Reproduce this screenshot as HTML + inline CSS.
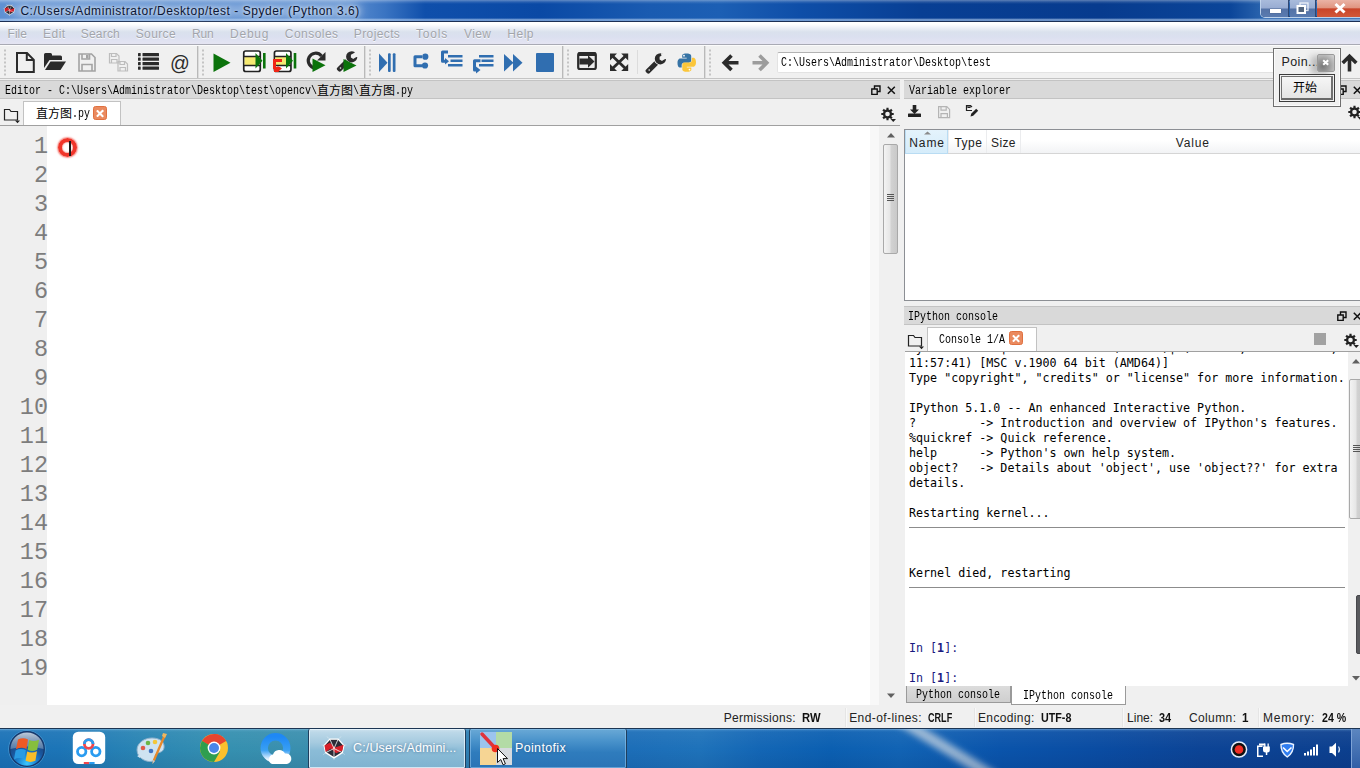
<!DOCTYPE html>
<html lang="en">
<head>
<meta charset="utf-8">
<title>Spyder</title>
<style>
*{box-sizing:border-box;margin:0;padding:0}
html,body{width:1360px;height:768px;overflow:hidden;background:#f0f0f0;font-family:"Liberation Sans","Noto Sans CJK SC",sans-serif;font-size:12px;color:#000}
.abs{position:absolute}
#titlebar{position:absolute;left:0;top:0;width:1360px;height:22px;background:linear-gradient(90deg,#5f91d3 0px,#5a8dd1 200px,#5d8fd1 345px,#3a74c2 385px,#0f4fab 425px,#0a49a5 540px,#1a5bb1 650px,#1c5fb4 720px,#0e4ea8 800px,#083f94 920px,#073b8e 1100px,#0b4599 1230px,#2a64ae 1262px);border-bottom:1px solid #1b2f55}
#titletext{position:absolute;left:20.4px;top:4px;font-size:12px;letter-spacing:.55px;color:#0b1533;white-space:nowrap;text-shadow:0 0 6px rgba(255,255,255,.75),0 0 3px rgba(255,255,255,.6)}
#tglow{position:absolute;left:10px;top:3px;width:352px;height:15px;background:rgba(255,255,255,.27);filter:blur(5px);border-radius:8px}
#tshine{position:absolute;left:0;top:0;width:1360px;height:21px;background:linear-gradient(180deg,rgba(255,255,255,.35) 0,rgba(255,255,255,.12) 2px,rgba(255,255,255,0) 4px,rgba(255,255,255,0) 18px,rgba(190,215,245,.55) 19.500px,rgba(190,215,245,.55) 21px)}
#winbtns{position:absolute;left:1260px;top:0;width:101px;height:18px;border:1px solid rgba(215,228,245,.85);border-top:none;border-radius:0 0 0 5px;overflow:hidden;box-shadow:0 0 0 1px rgba(20,40,80,.5) inset}
#bmin,#bmax,#bclose{position:absolute;top:0;height:17px}
#bmin{left:0;width:28px;background:linear-gradient(180deg,#a9bbdb 0,#98acd2 48%,#5472a6 52%,#5a7bb0 100%);border-right:1px solid #2f4873}
#bmin i{position:absolute;left:9px;top:9px;width:11px;height:3.500px;background:#fff;box-shadow:0 0 1px #334}
#bmax{left:29px;width:26px;background:linear-gradient(180deg,#a9bbdb 0,#98acd2 48%,#5472a6 52%,#5a7bb0 100%);border-right:1px solid #2f4873}
#bclose{left:56px;width:46px;background:linear-gradient(180deg,#eab3a5 0,#e09580 46%,#c9452a 52%,#d2583a 100%)}
#menubar{position:absolute;left:0;top:22px;width:1360px;height:23px;background:linear-gradient(180deg,#fff 0,#fff 2px,#eceff7 6px,#dae1ed 10px,#dbe0f0 15px,#e5e4f2 22px);border-bottom:1px solid #a9aab4}
#menubar span{position:absolute;top:4.5px;text-shadow:0 1px 0 rgba(255,255,255,.8);color:#a2a5ab;font-size:12px;white-space:nowrap}
#toolbar{position:absolute;left:0;top:45px;width:1360px;height:34px;background:#f0f0f0;border-top:1px solid #fbfbfb;border-bottom:1px solid #c4c4c4}
.docktitle{position:absolute;height:19px;background:#d9d9d9;border-top:1px solid #c3c3c3;border-bottom:1px solid #c3c3c3;font-family:"Liberation Mono","Noto Sans CJK SC",monospace;font-size:11px;letter-spacing:-0.6px;line-height:17px;white-space:nowrap;color:#000}
.docktitle .cj{letter-spacing:0;font-size:12px}
.sm{position:absolute;font-family:"Liberation Mono",monospace;font-size:12px;line-height:12px;white-space:nowrap;transform:scaleX(.8333);transform-origin:0 0;color:#000;letter-spacing:0}
.ck{position:absolute;font-family:"Noto Sans CJK SC","Liberation Sans",sans-serif;font-size:12px;line-height:12px;white-space:nowrap;color:#000;letter-spacing:0}
.mono{font-family:"Liberation Mono","Noto Sans CJK SC",monospace;font-size:11px;letter-spacing:-0.6px;white-space:nowrap}
#pathbox{position:absolute;left:777px;top:6px;width:560px;height:21px;background:#fff;border:1px solid #e3e3e3;border-top-color:#b2b2b2;border-radius:2px;padding:4px 0 0 3px;line-height:12px}
#editor{position:absolute;left:0;top:126px;width:870px;height:579px;background:#fff}
#gutter{position:absolute;left:0;top:0;width:47px;height:579px;background:#efefef}
.ln{position:absolute;left:1px;width:47px;text-align:right;font-family:"Liberation Mono","DejaVu Sans Mono",monospace;font-size:23.5px;color:#7d7d7d;line-height:29px;height:29px;padding-right:0}
#ring{position:absolute;left:58.1px;top:11.8px;width:19.2px;height:19.2px;border-radius:50%;border:4px solid #f0352a;box-shadow:0 0 1.5px 1px rgba(240,53,42,.55),inset 0 0 1.5px .5px rgba(240,53,42,.5)}
#caret{position:absolute;left:69px;top:14.5px;width:1.5px;height:15px;background:#1a1a1a}
#edscroll{position:absolute;left:883px;top:126px;width:16px;height:579px;background:#f0f0f0}
#edthumb{position:absolute;left:0;top:18px;width:15px;height:110px;border:1px solid #a9a9a9;border-radius:2px;background:linear-gradient(90deg,#f3f3f3 0,#e6e6e6 45%,#d2d2d2 55%,#c9c9c9 100%)}
#edthumb i{position:absolute;left:3px;width:7px;height:1px;background:#555}
#edthumb i:nth-child(1){top:49px}#edthumb i:nth-child(2){top:51px}#edthumb i:nth-child(3){top:53px}#edthumb i:nth-child(4){top:55px}
#edtabs{position:absolute;left:0;top:100px;width:900px;height:26px;border-bottom:1px solid #a0a0a0}
.tab{position:absolute;background:#fff;border:1px solid #c2c2c2;border-bottom:none}
.cj{letter-spacing:0;font-size:12px}
.xbtn{position:absolute;width:14px;height:14px;border-radius:2.5px;background:#ea8a5f;border:1px solid #e0703f}
.xbtn:before,.xbtn:after{content:"";position:absolute;left:5px;top:1.500px;width:2.400px;height:9px;background:#fff;transform:rotate(45deg);border-radius:.5px}
.xbtn:after{transform:rotate(-45deg)}
#vartable{position:absolute;left:904px;top:129px;width:461px;height:172px;background:#fff;border:1px solid #8c8f94}
#varhead{position:absolute;left:0;top:0;width:458px;height:24px;background:linear-gradient(180deg,#fff 0,#fff 45%,#f2f3f5 100%);border-bottom:1px solid #d5d5d5}
#varhead span{position:absolute;top:6px;font-size:12px;color:#222}
#varhead i{position:absolute;top:0;width:1px;height:23px;background:#ebecee}
#hname{position:absolute;left:0;top:0;width:43px;height:24px;background:linear-gradient(180deg,#e4f3fc 0,#d5ecfa 100%);border:1px solid #b9dcf3;border-top:none}
#contabs{position:absolute;left:905px;top:325px;width:455px;height:27px;border-bottom:1px solid #a0a0a0}
#conscroll{position:absolute;left:1348px;top:352px;width:12px;height:334px;background:#f0f0f0}
#conthumb1{position:absolute;left:1px;top:27px;width:15px;height:140px;border:1px solid #a9a9a9;border-radius:2px;background:linear-gradient(90deg,#f3f3f3 0,#e6e6e6 45%,#d2d2d2 55%,#c9c9c9 100%)}
#conthumb2{position:absolute;left:8px;top:243px;width:14px;height:59px;border:1px solid #46474b;border-radius:2px;background:#58595d}
#conthumb1 i{position:absolute;left:3px;width:8px;height:1px;background:#555}
#bottabs{position:absolute;left:905px;top:686px;width:455px;height:20px}
#bt1{position:absolute;left:1px;top:0;width:105px;height:17px;background:linear-gradient(180deg,#dcdcdc,#cfcfcf);border:1px solid #9a9a9a;border-top:none;padding:2px 0 0 10px;line-height:12px}
#bt2{position:absolute;left:106px;top:0;width:115px;height:19px;background:#fff;border:1px solid #9a9a9a;border-top:none;padding:4px 0 0 12px;line-height:12px}
#console{position:absolute;left:905px;top:352px;width:443px;height:334px;background:#fff;overflow:hidden}
#console pre{position:absolute;left:4px;top:-11.5px;font-family:"DejaVu Sans Mono","Liberation Mono",monospace;font-size:11.68px;line-height:15px;color:#000}
.hr{position:absolute;left:4px;width:436px;height:1px;background:#8c8c8c}
#console pre.inp{color:#1a1a80}
#popup{position:absolute;left:1273px;top:48px;width:68px;height:59px;background:#f0f0f0;border:1px solid #6f6f6f;box-shadow:inset 0 0 0 1px #fbfbfb}
#poptitle{position:absolute;left:7.500px;top:6px;font-size:12.500px;letter-spacing:.4px;color:#222}
#popx{position:absolute;left:43px;top:5px;width:18px;height:18px;border:1px solid #9a9a9a;border-radius:2px;background:radial-gradient(circle at 30% 70%,#7a7a7a 0,#9a9a9a 40%,#d8d8d8 100%);box-shadow:-6px 2px 6px rgba(90,90,90,.35)}
#popbtn{position:absolute;left:5px;top:25px;width:56px;height:28px;border:1px solid #3c3c3c;padding:1px;background:#f0f0f0}
#popbtn div{width:52px;height:24px;border:1px solid #707070;border-right:2px solid #707070;border-bottom:2px solid #696969;background:linear-gradient(180deg,#f6f6f6,#e4e4e4);text-align:center;padding-right:3px}
#popbtn span{font-family:"Liberation Sans","Noto Sans CJK SC",sans-serif;font-size:12px;line-height:22px;color:#000}
#statusbar{position:absolute;left:0;top:706px;width:1360px;height:22px;background:#f0f0f0}
#statusbar span{position:absolute;top:5px;font-size:12px;white-space:nowrap;color:#222}
#statusbar b{position:absolute;top:5px;font-weight:bold;font-size:12px;white-space:nowrap;color:#111}
#statusbar i{position:absolute;top:2px;width:2px;height:19px;background:linear-gradient(90deg,#e5e5e5 50%,#f8f8f8 50%)}
#tkstreak{position:absolute;left:887px;top:14px;width:120px;height:11px;background:rgba(185,203,220,.8);filter:blur(3px);transform:rotate(31.4deg);border-radius:5px}
#tktop{position:absolute;left:0;top:0;width:1360px;height:40px;background:linear-gradient(180deg,rgba(170,210,240,.55) 0,rgba(170,210,240,.18) 1.500px,rgba(255,255,255,.05) 3px,rgba(255,255,255,0) 50%,rgba(0,0,40,.08) 100%)}
#orb{position:absolute;left:7px;top:0;width:40px;height:40px}
#tb1,#tb2{position:absolute;top:0;height:40px;border:1px solid #1f3f5e;border-top:none;border-radius:2px}
#tb1{left:308px;width:158px;background:linear-gradient(180deg,#cfe3ef 0,#bcd8e8 8%,#a5cadf 35%,#8bbcd7 55%,#7fb3d0 100%);box-shadow:inset 0 0 0 1px rgba(235,247,255,.75)}
#tb2{left:469px;width:158px;background:linear-gradient(180deg,#6aa9d6 0,#4a93cb 30%,#2f7cbd 60%,#2a74b6 100%);box-shadow:inset 0 0 0 1px rgba(150,200,240,.55)}
#tb1 span,#tb2 span{position:absolute;top:12px;font-size:12.500px;color:#fff;white-space:nowrap;text-shadow:0 0 3px rgba(30,60,100,.6)}
#showdesk{position:absolute;left:1351px;top:0;width:9px;height:40px;background:linear-gradient(180deg,#5c86c0,#2f5ea6);border-left:1px solid #7ea3d6}
#taskbar{position:absolute;left:0;top:728px;width:1360px;height:40px;background:linear-gradient(90deg,#1b72b7 0,#1c75b7 60px,#2a85b4 140px,#3590b0 230px,#3a8fae 300px,#2e80b4 470px,#1c6eb8 630px,#1e72ba 700px,#1366b5 760px,#0b5fb1 830px,#1163b4 900px,#0a54ab 1000px,#0a4ca2 1100px,#0c4496 1200px,#0c3f8e 1360px);border-top:1px solid #1c3553;overflow:hidden}
</style>
</head>
<body>
<svg width="0" height="0" style="position:absolute"><defs>
<g id="gear"><path d="M13.71 6.92L13.71 9.08L11.97 9.07L11.42 10.40L12.65 11.62L11.12 13.15L9.90 11.92L8.57 12.47L8.58 14.21L6.42 14.21L6.43 12.47L5.10 11.92L3.88 13.15L2.35 11.62L3.58 10.40L3.03 9.07L1.29 9.08L1.29 6.92L3.03 6.93L3.58 5.60L2.35 4.38L3.88 2.85L5.10 4.08L6.43 3.53L6.42 1.79L8.58 1.79L8.57 3.53L9.90 4.08L11.12 2.85L12.65 4.38L11.42 5.60L11.97 6.93ZM9.80 8.00A2.3 2.3 0 1 0 5.20 8.00A2.3 2.3 0 1 0 9.80 8.00Z" fill="#222" fill-rule="evenodd"/><path d="M10.500 13h5.500l-2.750 3z" fill="#222"/></g>
<g id="float"><path d="M3.500 1h5.500v5.500h-5.500z" fill="none" stroke="#111" stroke-width="1.400"/><path d="M.8 4h5.400v5.400h-5.400z" fill="#d9d9d9" stroke="#111" stroke-width="1.400"/></g>
<g id="spy"><path d="M7 1h8l5.500 6-1.500 7-8 5-8-5-1.500-7z" fill="#2b2b36" stroke="#fff" stroke-width="1.300" stroke-linejoin="round"/><path d="M1.800 7.200l5.200-2.700 5 4.500 8.200-2.700-1.200 5.900-6 2.300-5-4.500-5 3.300z" fill="#d8202a"/><g stroke="#fff" stroke-width=".8" opacity=".95"><path d="M11 10L7 1M11 10l4-9M11 10l-8 4M11 10v9M11 10l8 4"/></g><g stroke="#fff" stroke-width=".5" opacity=".6"><path d="M7 1L4 -1.500M15 1l3-2.500M20.500 7l2.500-.5M1.500 7l-2.500-.5M3 14l-2.500 2M19 14l2.500 2M11 19v2"/></g></g>
<g id="closex"><path d="M.8 .8l7 7M7.800 .8l-7 7" stroke="#111" stroke-width="1.500" fill="none"/></g>
</defs></svg>
<div id="titlebar"><div id="tglow"></div><div id="tshine"></div>
<svg class="abs" style="left:2.5px;top:4px" width="13" height="12" viewBox="-1 -1.500 24 22.500"><use href="#spy"/></svg>
<div id="titletext">C:/Users/Administrator/Desktop/test - Spyder (Python 3.6)</div>
<div id="winbtns"><div id="bmin"><i></i></div><div id="bmax"><svg width="26" height="18" viewBox="0 0 26 18"><rect x="10" y="3" width="8" height="7.500" fill="none" stroke="#fff" stroke-width="1.300" opacity=".8"/><rect x="7.500" y="6" width="7.500" height="7" fill="#54667f" stroke="#fff" stroke-width="2"/></svg></div><div id="bclose"><svg width="44" height="18" viewBox="0 0 44 18"><path d="M18.500 4l9 8.500M27.500 4l-9 8.500" stroke="#fff" stroke-width="3"/></svg></div></div>
</div>
<div id="menubar">
<span style="left:7.6px;letter-spacing:0.01px">File</span><span style="left:43.0px;letter-spacing:0.48px">Edit</span><span style="left:80.7px;letter-spacing:0.21px">Search</span><span style="left:135.7px;letter-spacing:0.38px">Source</span><span style="left:191.9px;letter-spacing:-0.11px">Run</span><span style="left:230.0px;letter-spacing:0.78px">Debug</span><span style="left:284.8px;letter-spacing:0.47px">Consoles</span><span style="left:353.8px;letter-spacing:0.39px">Projects</span><span style="left:416.0px;letter-spacing:0.82px">Tools</span><span style="left:464.0px;letter-spacing:0.38px">View</span><span style="left:507.2px;letter-spacing:0.55px">Help</span>
</div>
<div id="toolbar">
<svg class="abs" style="left:0;top:-1px" width="1360" height="34" viewBox="0 45 1360 34">
<!-- grips & separators -->
<defs>
<g id="grip"><rect x="0" y="49.5" width="2" height="2"/><rect x="0" y="53.5" width="2" height="2"/><rect x="0" y="57.5" width="2" height="2"/><rect x="0" y="61.5" width="2" height="2"/><rect x="0" y="65.5" width="2" height="2"/><rect x="0" y="69.5" width="2" height="2"/><rect x="0" y="73.5" width="2" height="2"/></g>
</defs>
<use href="#grip" x="4" fill="#c4c4c4"/><use href="#grip" x="202" fill="#c4c4c4"/><use href="#grip" x="369" fill="#c4c4c4"/><use href="#grip" x="567" fill="#c4c4c4"/><use href="#grip" x="709" fill="#c4c4c4"/>
<g stroke="#b9b9b9" stroke-width="1"><path d="M197.5 46V78M364.5 46V78M562.5 46V78M704.5 46V78"/></g>
<g stroke="#dcdcdc" stroke-width="1"><path d="M198.5 46V78M365.5 46V78M563.5 46V78M705.5 46V78M637.5 50V74"/></g>
<!-- new file -->
<path d="M17 53h10l6.800 6.800v12.200H17z M26.800 53v7h7" fill="none" stroke="#2b2b2b" stroke-width="2" stroke-linejoin="miter"/>
<!-- open folder -->
<path d="M44 68V54.5q0-1.5 1.500-1.500h5q1.500 0 1.500 1.500v1h8.500q1.500 0 1.500 1.500v3h-12.500z" fill="#2b2b2b"/>
<path d="M50.500 61.500h15.500l-5.500 8.500h-15.500z" fill="#2b2b2b"/>
<!-- save gray -->
<g fill="none" stroke="#a3a3a3" stroke-width="1.600"><path d="M79 54h12.500l3.500 3.500v13.500h-16z"/><path d="M82 54v5h7.500v-5M82 71v-6.500h10v6.500"/></g>
<rect x="86" y="55" width="2.500" height="3.500" fill="#a3a3a3"/>
<!-- save all -->
<g fill="none" stroke="#bdbdbd" stroke-width="1.200"><path d="M109.500 53.500h7l2.500 2.500v7h-9.500z"/><path d="M111.500 53.500v3h4.500v-3M111.500 63v-3.500h5.500v3.500"/><path d="M118 61.500h7l2.500 2.500v7h-9.500z"/><path d="M120 61.500v3h4.500v-3M120 71v-3.500h5.500v3.500"/></g>
<!-- list -->
<g fill="#2b2b2b"><rect x="138" y="53" width="2.700" height="3.300" rx=".5"/><rect x="142.500" y="53" width="16.500" height="3.300" rx=".5"/><rect x="138" y="57.500" width="2.700" height="3.300" rx=".5"/><rect x="142.500" y="57.500" width="16.500" height="3.300" rx=".5"/><rect x="138" y="62" width="2.700" height="3.300" rx=".5"/><rect x="142.500" y="62" width="16.500" height="3.300" rx=".5"/><rect x="138" y="66.500" width="2.700" height="3.300" rx=".5"/><rect x="142.500" y="66.500" width="16.500" height="3.300" rx=".5"/></g>
<!-- @ -->
<text x="170" y="69.500" font-family="Liberation Sans, sans-serif" font-size="19.500" fill="#2b2b2b">@</text>
<!-- run -->
<path d="M213.500 53.500v18.500l17-9.250z" fill="#0b730b"/>
<!-- run cell -->
<g id="cell"><rect x="243.750" y="51" width="16.500" height="20.500" rx="2" fill="#fff" stroke="#222" stroke-width="1.700"/><rect x="244.600" y="57" width="14.800" height="8" fill="#f6ea72"/><path d="M243.750 56.500h16.500M243.750 65.500h16.500" stroke="#222" stroke-width="1.500"/></g>
<path d="M255.500 53v15.500l7-7.750z" fill="#0b730b"/><rect x="263" y="53" width="2.600" height="15.500" fill="#0b730b"/>
<!-- run cell advance -->
<use href="#cell" x="30.700"/>
<path d="M282 60.500h-7.500v8.500" fill="none" stroke="#f02616" stroke-width="3"/><path d="M274 67h6.500l-2 5h-4.500z" fill="#f02616"/><path d="M277.500 66l4.500 2.500-4.500 3.500z" fill="#f02616"/>
<path d="M286 53v15.500l7-7.750z" fill="#0b730b"/><rect x="293.700" y="53" width="2.600" height="15.500" fill="#0b730b"/>
<!-- re-run -->
<path d="M315.500 68a7.400 7.400 0 1 1 6-12" fill="none" stroke="#2b2b2b" stroke-width="3.200"/><path d="M325.500 52v8.500h-8.500z" fill="#2b2b2b"/>
<path d="M312.500 58.500v13.500l13-6.750z" fill="#0b730b"/>
<!-- debug wrench -->
<g transform="translate(-308.700 -2)"><use href="#wrench"/></g>
<path d="M343.500 59v13l13-6.500z" fill="#0b730b"/>
<!-- debug blue -->
<g fill="#306eb0">
<path d="M379 53.500v18.500l8.500-9.250z"/><rect x="388" y="53.300" width="2.700" height="18.700" rx="1"/><rect x="392.800" y="53.300" width="2.700" height="18.700" rx="1"/>
<circle cx="425.300" cy="56.700" r="3.100"/><circle cx="425" cy="65.500" r="3.100"/>
<path d="M504 54v17.500l9.500-8.750z"/><path d="M513 54v17.500l9.500-8.750z"/>
<rect x="536" y="53" width="18" height="19" rx="1"/>
<rect x="448" y="55" width="14.500" height="2.500"/><rect x="450.500" y="59.500" width="12" height="2.500"/><rect x="448" y="64" width="14.500" height="2.500"/>
<rect x="479" y="55" width="14.500" height="2.500"/><rect x="481.500" y="59.500" width="12" height="2.500"/><rect x="479" y="64" width="14.500" height="2.500"/>
<path d="M445 58v6.500l4-3.250z"/><path d="M476 66.500v7l4.500-3.500z"/>
</g>
<g fill="none" stroke="#306eb0" stroke-width="3" stroke-linejoin="round"><path d="M422 56.800h-7v9h7.500"/><path d="M448 52h-5.500v9.200h3"/><path d="M480.500 60.800h-6v9.200h2"/></g>
<!-- max pane -->
<rect x="578.200" y="53.200" width="17.600" height="15.800" rx="1.800" fill="#ececec" stroke="#2b2b2b" stroke-width="2.200"/><rect x="578" y="52.300" width="18" height="3.700" rx="1" fill="#2b2b2b"/>
<path d="M579.500 58.500h8.500v-3.300l6.500 6.300-6.500 6.300v-3.300h-8.500z" fill="#2b2b2b"/>
<!-- fullscreen -->
<g stroke="#2b2b2b" stroke-width="2.800"><path d="M612.500 56l13 12.500M625.500 56l-13 12.500"/></g>
<g fill="#2b2b2b"><path d="M610 53.500h7l-7 7z"/><path d="M628.200 53.500h-7l7 7z"/><path d="M610 71h7l-7-7z"/><path d="M628.200 71h-7l7-7z"/></g>
<!-- wrench -->
<g id="wrench"><path transform="translate(644.400 51.600) scale(.0125)" d="M448 1472q0-26-19-45t-45-19-45 19-19 45 19 45 45 19 45-19 19-45zm644-420l-682 682q-37 37-90 37-52 0-91-37l-106-108q-38-36-38-90 0-53 38-91l681-681q39 98 114.500 173.500t173.500 114.500zm634-435q0 39-23 106-47 134-164.500 217.500t-258.500 83.500q-185 0-316.500-131.500t-131.500-316.500 131.500-316.500 316.500-131.500q58 0 121.500 16.500t107.500 46.500q16 11 16 28t-16 28l-293 169v224l193 107q5-3 79-48.500t135.500-81 70.500-35.500q15 0 23.500 10t8.500 25z" fill="#2b2b2b"/></g>
<path d="M660.800 53.200l5 0-3.700 4.300z" fill="#f0f0f0"/>
<!-- python -->
<g><path d="M686.500 53.500c-4.500 0-4.300 2-4.300 2v2.200h4.500v.8h-6.200s-3-.3-3 4.500 2.600 4.600 2.600 4.600h1.600v-2.300s-.1-2.600 2.600-2.600h4.400s2.500 0 2.500-2.400v-4.200s.4-2.600-4.700-2.600z" fill="#3673a5"/><circle cx="684" cy="55.700" r=".9" fill="#fff"/>
<path d="M687 71.800c4.500 0 4.300-2 4.300-2v-2.200h-4.500v-.8h6.200s3 .3 3-4.500-2.600-4.600-2.600-4.600h-1.600v2.300s.1 2.600-2.600 2.600h-4.400s-2.500 0-2.500 2.400v4.200s-.4 2.600 4.700 2.600z" fill="#fbc63a"/><circle cx="689.500" cy="69.600" r=".9" fill="#fff"/></g>
<!-- back / forward -->
<path d="M738.500 62.800h-13M731.500 55.500l-7.300 7.300 7.300 7.300" fill="none" stroke="#2b2b2b" stroke-width="3.600" stroke-linejoin="miter"/>
<path d="M752.500 62.800h13M759.500 55.500l7.300 7.300-7.300 7.300" fill="none" stroke="#9c9c9c" stroke-width="3.600" stroke-linejoin="miter"/>
<!-- up arrow -->
<path d="M1349.500 71.500v-14M1342.700 63l6.800-6.800 6.800 6.800" fill="none" stroke="#2b2b2b" stroke-width="3.600"/>
</svg>
<div id="pathbox"><span class="sm" style="left:3px;top:4px">C:\Users\Administrator\Desktop\test</span></div>
</div>
<div class="docktitle" style="left:0;top:80px;width:900px"><span class="sm" style="left:5px;top:4px">Editor - C:\Users\Administrator\Desktop\test\opencv\</span><span class="ck" style="left:317px;top:3px">直方图</span><span class="sm" style="left:353px;top:4px">\</span><span class="ck" style="left:359px;top:3px">直方图</span><span class="sm" style="left:395px;top:4px">.py</span></div>
<div class="docktitle" style="left:904px;top:80px;width:456px"><span class="sm" style="left:5px;top:4px">Variable explorer</span></div>
<div class="docktitle" style="left:904px;top:306px;width:456px"><span class="sm" style="left:4px;top:4px">IPython console</span></div>
<div id="editor"><div id="gutter"></div>
<div class="ln" style="top:6px">1</div><div class="ln" style="top:35px">2</div><div class="ln" style="top:64px">3</div><div class="ln" style="top:93px">4</div><div class="ln" style="top:122px">5</div><div class="ln" style="top:151px">6</div><div class="ln" style="top:180px">7</div><div class="ln" style="top:209px">8</div><div class="ln" style="top:238px">9</div><div class="ln" style="top:267px">10</div><div class="ln" style="top:296px">11</div><div class="ln" style="top:325px">12</div><div class="ln" style="top:354px">13</div><div class="ln" style="top:383px">14</div><div class="ln" style="top:412px">15</div><div class="ln" style="top:441px">16</div><div class="ln" style="top:470px">17</div><div class="ln" style="top:499px">18</div><div class="ln" style="top:528px">19</div>
<div id="ring"></div><div id="caret"></div>
</div>
<div class="abs" style="left:870px;top:126px;width:9px;height:579px;background:#f8f8f8"></div>
<div id="edscroll">
<svg class="abs" style="left:0;top:0" width="16" height="579" viewBox="0 0 16 579"><path d="M4 11.500l4-4.500 4 4.500z" fill="#606060"/><path d="M4 567.500l4 4.500 4-4.500z" fill="#606060"/></svg>
<div id="edthumb"><i></i><i></i><i></i><i></i></div>
</div>
<div id="edtabs">
<svg class="abs" style="left:3px;top:6px" width="18" height="18" viewBox="0 0 18 18"><path d="M1.500 3.500h5l1.500 2h6.500v8.500h-13z" fill="none" stroke="#222" stroke-width="1.200"/><path d="M12 14.500h5l-2.500 2.800z" fill="#222"/></svg>
<div class="tab" style="left:23px;top:1px;width:98px;height:24px"><span class="ck" style="left:12px;top:5px">直方图</span><span class="sm" style="left:48px;top:6px">.py</span><span class="xbtn" style="left:69px;top:4px"></span></div>
<svg class="abs" style="left:880px;top:6px" width="18" height="18" viewBox="0 0 18 18"><use href="#gear"/></svg>
</div>
<svg class="abs" style="left:870px;top:85px" width="30" height="11" viewBox="0 0 30 11"><use href="#float" x="1" y="0"/><use href="#closex" x="17" y="1"/></svg>
<svg class="abs" style="left:1336px;top:85px" width="24" height="11" viewBox="0 0 24 11"><use href="#float" x="1" y="0"/><use href="#closex" x="17" y="1"/></svg>
<svg class="abs" style="left:1336px;top:311px" width="24" height="11" viewBox="0 0 24 11"><use href="#float" x="1" y="0"/><use href="#closex" x="17" y="1"/></svg>
<!-- variable explorer -->
<svg class="abs" style="left:905px;top:100px" width="90" height="26" viewBox="905 100 90 26">
<g fill="#222"><path d="M912.700 105h3.600v4.500h2.700l-4.500 4.500-4.500-4.500h2.700z"/><rect x="908" y="113.500" width="13" height="3.500" rx=".6"/></g>
<g fill="none" stroke="#b4b4b4" stroke-width="1.200"><path d="M938.600 106.600h8.200l2.800 2.800v8.200h-11z"/><path d="M941 106.600v3.600h5.200v-3.600M941 117.600v-4h6.400v4"/></g>
<g fill="none" stroke="#222" stroke-width="1.200"><path d="M972 110.500h-5.500v-5h4l1.500 1.500"/><path d="M968 105.500v2h2v-2"/></g>
<path d="M970.500 116.500l.7-2.700 5-5 2 2-5 5z" fill="#222"/>
</svg>
<svg class="abs" style="left:1346px;top:104px" width="14" height="18" viewBox="0 0 14 18"><use href="#gear" x="1"/></svg>
<div id="vartable"><div id="varhead"><div id="hname"></div><svg class="abs" style="left:19px;top:1px" width="7" height="4" viewBox="0 0 7 4"><path d="M0 3.500l3.500-3 3.500 3z" fill="#8a8a8a"/></svg>
<span style="left:4.2px;letter-spacing:.95px">Name</span><span style="left:49.4px;letter-spacing:.5px">Type</span><span style="left:86px;letter-spacing:.4px">Size</span><span style="left:270.8px;letter-spacing:.85px">Value</span>
<i style="left:43px"></i><i style="left:81px"></i><i style="left:115px"></i></div></div>
<!-- console header -->
<div id="contabs">
<svg class="abs" style="left:2px;top:7px" width="18" height="18" viewBox="0 0 18 18"><path d="M1.500 3.500h5l1.500 2h6.500v8.500h-13z" fill="none" stroke="#222" stroke-width="1.200"/><path d="M12 14.500h5l-2.500 2.800z" fill="#222"/></svg>
<div class="tab" style="left:22px;top:2px;width:110px;height:24px"><span class="sm" style="left:11px;top:6px">Console 1/A</span><span class="xbtn" style="left:81px;top:3px"></span></div>
<div class="abs" style="left:409px;top:8px;width:12px;height:12px;background:#a2a2a2"></div>
<svg class="abs" style="left:438px;top:7px" width="18" height="18" viewBox="0 0 18 18"><use href="#gear"/></svg>
</div>
<div id="conscroll"><svg class="abs" style="left:0;top:0" width="12" height="334" viewBox="0 0 12 334"><path d="M4 11.500l4-4.500 4 4.500z" fill="#606060"/><path d="M4 324l4 4.500 4-4.500z" fill="#606060"/></svg><div id="conthumb1"><i style="top:65px"></i><i style="top:67px"></i><i style="top:69px"></i><i style="top:71px"></i></div><div id="conthumb2"></div></div>
<div id="bottabs"><div id="bt1"><span class="sm" style="left:9px;top:3px">Python console</span></div><div id="bt2"><span class="sm" style="left:11px;top:4px">IPython console</span></div></div>
<div id="console"><pre>Python 3.6.0 |Anaconda 4.3.1 (64-bit)| (default, Dec 23 2016,
11:57:41) [MSC v.1900 64 bit (AMD64)]
Type "copyright", "credits" or "license" for more information.

IPython 5.1.0 -- An enhanced Interactive Python.
?         -> Introduction and overview of IPython's features.
%quickref -> Quick reference.
help      -> Python's own help system.
object?   -> Details about 'object', use 'object??' for extra
details.

Restarting kernel...
</pre>
<div class="hr" style="top:175px"></div>
<pre style="top:213.500px">Kernel died, restarting</pre>
<div class="hr" style="top:235px"></div>
<pre style="top:288.500px" class="inp">In [<b>1</b>]:

In [<b>1</b>]:</pre>
</div>
<div id="popup"><span id="poptitle">Poin...</span><div id="popx"><svg width="16" height="16" viewBox="0 0 16 16"><path d="M5.200 5.200l5 4.600M10.200 5.200l-5 4.600" stroke="#fff" stroke-width="2.100"/></svg></div>
<div id="popbtn"><div><span>开始</span></div></div></div>
<div id="statusbar">
<span style="left:723.7px;letter-spacing:0.3px">Permissions:</span><b style="left:801.8px;transform:scaleX(0.935);transform-origin:0 0">RW</b>
<span style="left:849.2px;letter-spacing:0.42px">End-of-lines:</span><b style="left:928.2px;transform:scaleX(0.756);transform-origin:0 0">CRLF</b>
<span style="left:978.0px;letter-spacing:0.36px">Encoding:</span><b style="left:1041.0px;transform:scaleX(0.894);transform-origin:0 0">UTF-8</b>
<span style="left:1127.0px;letter-spacing:0.03px">Line:</span><b style="left:1159.2px;transform:scaleX(0.913);transform-origin:0 0">34</b>
<span style="left:1188.9px;letter-spacing:0.4px">Column:</span><b style="left:1242.4px;transform:scaleX(0.97);transform-origin:0 0">1</b>
<span style="left:1263.1px;letter-spacing:0.76px">Memory:</span><b style="left:1322.2px;transform:scaleX(0.885);transform-origin:0 0">24 %</b>
<i style="left:845px"></i><i style="left:974px"></i><i style="left:1122px"></i><i style="left:1258px"></i>
</div>
<div id="taskbar"><div id="tkstreak"></div><div id="tktop"></div>
<!-- start orb -->
<div id="orb"><svg width="40" height="40" viewBox="0 0 40 40"><defs><radialGradient id="og" cx="50%" cy="92%" r="80%"><stop offset="0" stop-color="#3cc8ff"/><stop offset=".3" stop-color="#1d8ad8"/><stop offset=".6" stop-color="#19579f"/><stop offset="1" stop-color="#1b3d70"/></radialGradient><linearGradient id="osh" x1="0" y1="0" x2="0" y2="1"><stop offset="0" stop-color="#e6eef5" stop-opacity=".8"/><stop offset="1" stop-color="#9ab4cc" stop-opacity=".45"/></linearGradient></defs>
<circle cx="20" cy="20" r="18.300" fill="none" stroke="#5fa8dc" stroke-width="1" opacity=".6"/><circle cx="20" cy="20" r="17.300" fill="url(#og)" stroke="#16386c" stroke-width="1.200"/>
<path d="M3.500 20a16.500 16.500 0 0 1 33 0q-16.500-5-33 0z" fill="url(#osh)"/>
<path d="M11 10.500q5-2.500 10 0l-1.500 9.500q-5-2.500-10.500 .3z" fill="#ee5a24"/><path d="M22.200 11q4.500 2.300 9.800 -.3l-1.800 10q-5 2.500-9.500 0z" fill="#86bf3d"/><path d="M8.600 21.500q5-2.600 10.300 -.3l-1.700 9q-5-2.300-10.200 .3z" fill="#2a9be3"/><path d="M20.200 22.500q4.500 2.300 9.800 -.2l-1.600 9.500q-5 2.300-9.800 0z" fill="#f9bd27"/>
</svg></div>
<!-- baidu -->
<svg class="abs" style="left:72px;top:2px" width="34" height="34" viewBox="0 0 34 34"><rect x=".8" y=".7" width="32.400" height="32.400" rx="5.500" fill="#fff"/><circle cx="9.700" cy="20.600" r="4.200" fill="none" stroke="#2a9cf0" stroke-width="2.800"/><circle cx="23.800" cy="20.600" r="4.200" fill="none" stroke="#2a9cf0" stroke-width="2.800"/><circle cx="16.700" cy="13" r="4.300" fill="#fff" stroke="#f0464c" stroke-width="2.800"/><path d="M12.400 13a4.300 4.300 0 0 1 8.600 0" fill="none" stroke="#2a9cf0" stroke-width="2.800"/><rect x="11.800" y="31" width="5.400" height="2.100" fill="#f0464c"/><rect x="17.200" y="31" width="5.400" height="2.100" fill="#2a9cf0"/></svg>
<!-- paint -->
<svg class="abs" style="left:134px;top:3px" width="36" height="34" viewBox="0 0 36 34"><path d="M3 18c0-7 7-12 15-12s13 4 12 10c-1 5-6 4-8 6s1 5-3 7c-5 2-16-2-16-11z" fill="#cfe3f1" stroke="#8fb2cc" stroke-width="1"/><path d="M8 22l-5 2 3 2z" fill="#cfe3f1"/><circle cx="9" cy="16" r="2.300" fill="#e05a4a"/><circle cx="14" cy="11" r="2.300" fill="#6cb644"/><circle cx="21" cy="10" r="2.300" fill="#f3c73a"/><circle cx="17" cy="19" r="2.300" fill="#3f73c2"/><path d="M30 2l2 1.500-11 25-2.500 3.500.5-4.500z" fill="#e8892a"/><path d="M29 1l4 1-2 4-3-2z" fill="#f1b65e"/><path d="M19 28l2 1-2.500 3z" fill="#c9c9c9"/></svg>
<!-- chrome -->
<svg class="abs" style="left:198px;top:3px" width="32" height="32" viewBox="0 0 32 32"><circle cx="16" cy="16" r="14" fill="#fbc02d"/><path d="M16 16L3.880 9A14 14 0 0 1 28.120 9z" fill="#e8452f"/><path d="M16 2a14 14 0 0 1 12.120 7H16z" fill="#e8452f"/><path d="M3.880 9A14 14 0 0 0 16 30l6.060-10.500L16 16z" fill="#2f9e4f"/><path d="M3.880 9L10 19.500 16 16z" fill="#2f9e4f"/><circle cx="16" cy="16" r="6.400" fill="#fff"/><circle cx="16" cy="16" r="5" fill="#4a86e8"/></svg>
<!-- quark -->
<svg class="abs" style="left:258px;top:2px" width="36" height="36" viewBox="0 0 36 36"><defs><linearGradient id="qg" x1="0" y1="0" x2="0" y2="1"><stop offset="0" stop-color="#1e88f5"/><stop offset=".6" stop-color="#3aa0f3"/><stop offset="1" stop-color="#e8f4ff"/></linearGradient></defs><circle cx="17.500" cy="17" r="11.300" fill="none" stroke="url(#qg)" stroke-width="7.400"/><path d="M14 33a5 5 0 0 1 1-9.500 6.500 6.500 0 0 1 12-1 5.300 5.300 0 0 1 2 10.500z" fill="#fff"/></svg>
<!-- spyder button -->
<div id="tb1"><svg class="abs" style="left:12px;top:7px" width="26" height="25" viewBox="-1.500 -2 25 24"><use href="#spy"/></svg><span style="left:44px;letter-spacing:.15px">C:/Users/Admini...</span></div>
<!-- pointofix button -->
<div id="tb2"><svg class="abs" style="left:9px;top:2px" width="34" height="36" viewBox="0 0 34 36"><rect x="1" y="1" width="16" height="16" fill="#9cc4ee"/><rect x="17" y="1" width="16" height="16" fill="#b3dba6"/><rect x="1" y="17" width="16" height="17" fill="#f6d594"/><rect x="17" y="17" width="16" height="17" fill="#d6dade"/><path d="M3 3l14 15" stroke="#e0343c" stroke-width="3.500" stroke-linecap="round"/><circle cx="16.500" cy="17.500" r="3.800" fill="#f03020"/><path d="M18.500 17.500v14l3.300-3 2.300 5.300 2.300-1-2.300-5.200h4.400z" fill="#fff" stroke="#111" stroke-width="1"/></svg><span style="left:45px;letter-spacing:.35px">Pointofix</span></div>
<!-- tray -->
<svg class="abs" style="left:1225px;top:10px" width="135" height="24" viewBox="1225 738 135 24">
<circle cx="1239" cy="748.500" r="7.600" fill="#101010" stroke="#e6eefc" stroke-width="1.500"/><circle cx="1239" cy="748.500" r="4.300" fill="#f02d25"/>
<g fill="#fff"><path d="M1257 744.500h5.500v1.500h-4v8.500h4.500v1.500h-6z"/><path d="M1259 742.500h6v2h-6z" /><path d="M1263 745.500h1.200v-3h1.300v3h2v-3h1.300v3h1v3.500q0 2.500-2.500 2.500v2.500h-1.500v-2.500q-2.800 0-2.800-2.500z"/></g>
<path d="M1281 743.500q6-2.500 12.500 0 .3 8-6.250 12.500-6.550-4.500-6.250-12.500z" fill="#2f7df0" stroke="#eaf3ff" stroke-width="1.400"/><path d="M1283 746.500l4.250 4 4.250-4" fill="none" stroke="#fff" stroke-width="1.600"/>
<g fill="#fff"><rect x="1304" y="752" width="2" height="2.500"/><rect x="1307" y="750.500" width="2" height="4"/><rect x="1310" y="748.500" width="2" height="6"/><rect x="1313" y="746" width="2" height="8.500"/><rect x="1316" y="743.500" width="2" height="11"/></g>
<path d="M1329.500 745.500h2.500l4-3.800v14l-4-3.800h-2.500z" fill="#fff"/><path d="M1338.500 745.500q2 3 0 6" fill="none" stroke="#cfe0f5" stroke-width="1.200"/>
</svg>
<div id="showdesk"></div>
</div>
</body>
</html>
